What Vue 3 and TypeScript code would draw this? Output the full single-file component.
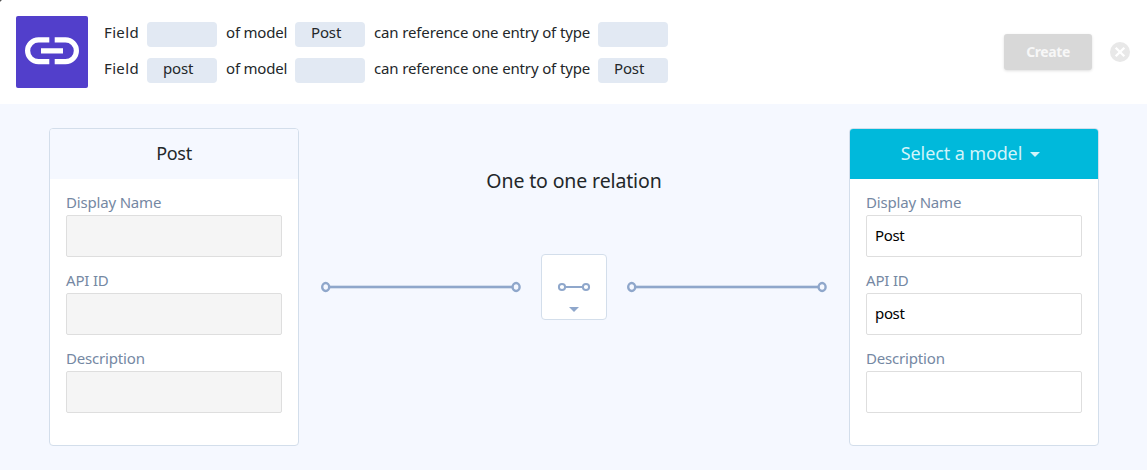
<script setup lang="ts">
interface Sentence {
  field: string
  model: string
  target: string
}

interface Field {
  label: string
  value: string
}

interface ModelCard {
  title: string
  selectable: boolean
  fields: Field[]
}

const sentences: Sentence[] = [
  { field: '', model: 'Post', target: '' },
  { field: 'post', model: '', target: 'Post' },
]

const source: ModelCard = {
  title: 'Post',
  selectable: false,
  fields: [
    { label: 'Display Name', value: '' },
    { label: 'API ID', value: '' },
    { label: 'Description', value: '' },
  ],
}

const target: ModelCard = {
  title: 'Select a model',
  selectable: true,
  fields: [
    { label: 'Display Name', value: 'Post' },
    { label: 'API ID', value: 'post' },
    { label: 'Description', value: '' },
  ],
}
</script>

<template>
  <div class="page">
    <header class="top">
      <div class="logo">
        <svg width="72" height="72" viewBox="0 0 72 72" fill="none" stroke="#fff" stroke-width="5.2">
          <path d="M33.3 23.9H22.5a10.9 10.9 0 0 0 0 21.8h10.8M38.7 23.9h10.8a10.9 10.9 0 0 1 0 21.8H38.7M25 34.8h22" />
        </svg>
      </div>
      <div class="sentences">
        <div v-for="(s, i) in sentences" :key="i" class="sentence">
          <span class="w-field">Field</span>
          <span class="pill">{{ s.field }}</span>
          <span class="w-of">of model</span>
          <span class="pill">{{ s.model }}</span>
          <span class="w-can">can reference one entry of type</span>
          <span class="pill">{{ s.target }}</span>
        </div>
      </div>
      <button class="create" disabled>Create</button>
      <svg class="close" width="20" height="20" viewBox="0 0 20 20">
        <circle cx="10" cy="10" r="10" fill="#e8e8e8" />
        <path d="M5.7 5.7l8.6 8.6M14.3 5.7l-8.6 8.6" stroke="#fff" stroke-width="2.3" />
      </svg>
    </header>

    <main class="board">
      <template v-for="(card, n) in [source, target]" :key="n">
        <section class="card" :class="{ active: card.selectable }">
          <h2 class="card-head">
            <span class="card-title">{{ card.title }}</span>
            <svg v-if="card.selectable" class="caret" width="10" height="5" viewBox="0 0 10 5">
              <path d="M0 0h10L5 5z" fill="currentColor" />
            </svg>
          </h2>
          <div class="card-body">
            <label v-for="f in card.fields" :key="f.label" class="field">
              <span class="label">{{ f.label }}</span>
              <span class="input">{{ f.value }}</span>
            </label>
          </div>
        </section>

        <section v-if="n === 0" class="relation">
          <h1 class="heading">One to one relation</h1>
          <div class="connector">
            <svg width="202" height="12" viewBox="0 0 202 12" fill="none" stroke="#8fa7cb">
              <path d="M9.5 6h183" stroke="#d5dfee" stroke-width="4" />
              <path d="M9.5 6h183" stroke-width="2" />
              <ellipse cx="5.7" cy="6" rx="3.5" ry="4" stroke-width="2.4" />
              <ellipse cx="196.1" cy="6" rx="3.5" ry="4" stroke-width="2.4" />
            </svg>
            <div class="kind">
              <svg width="64" height="64" viewBox="0 0 64 64" fill="none" stroke="#8fa7cb" stroke-width="2">
                <path d="M23 32h18" />
                <circle cx="20" cy="32" r="3.1" />
                <circle cx="44" cy="32" r="3.1" />
                <path d="M27 52h10l-5 5z" fill="#8fa7cb" stroke="none" />
              </svg>
            </div>
            <svg width="202" height="12" viewBox="0 0 202 12" fill="none" stroke="#8fa7cb">
              <path d="M9.5 6h183" stroke="#d5dfee" stroke-width="4" />
              <path d="M9.5 6h183" stroke-width="2" />
              <ellipse cx="5.7" cy="6" rx="3.5" ry="4" stroke-width="2.4" />
              <ellipse cx="196.1" cy="6" rx="3.5" ry="4" stroke-width="2.4" />
            </svg>
          </div>
        </section>
      </template>
    </main>
  </div>
</template>

<style>
body {
  background: #f5f8ff;
}
</style>

<style scoped>
.page {
  width: 1147px;
  height: 470px;
  overflow: hidden;
  background: #f5f8ff;
  color: #23272a;
  font-family: "Noto Sans", "Open Sans", sans-serif;
  font-size: 15px;
}
.top {
  display: flex;
  align-items: center;
  box-sizing: border-box;
  height: 104px;
  padding: 0 17px 0 16px;
  background: radial-gradient(circle at 0 0, #555 1px, transparent 2px) #fff;
}
.logo {
  width: 72px;
  height: 72px;
  border-radius: 2px;
  background: #523fcb;
}
.logo svg {
  display: block;
}
.sentences {
  display: grid;
  gap: 11px;
  margin-left: 16px;
}
.sentence {
  display: grid;
  grid-template-columns: 43px 70px 78px 70px 233px 70px;
  height: 25px;
  line-height: 20px;
  white-space: nowrap;
}
.w-field {
  letter-spacing: 0.35px;
}
.w-of,
.w-can {
  padding-left: 9px;
}
.w-can {
  letter-spacing: -0.14px;
}
.w-of {
  letter-spacing: -0.2px;
}
.pill {
  box-sizing: border-box;
  height: 25px;
  padding-left: 16px;
  border-radius: 4px;
  background: #e2e9f3;
  letter-spacing: -0.15px;
}
.create {
  width: 88px;
  height: 36px;
  margin: 0 18px 0 auto;
  padding: 0;
  border: 0;
  border-radius: 3px;
  background: #d8d8d8;
  box-shadow: 0 1px 3px rgba(0, 0, 0, 0.13);
  color: #f7f7f7;
  font: 700 14px/36px "Noto Sans", sans-serif;
  letter-spacing: -0.4px;
}
.board {
  display: flex;
  justify-content: space-between;
  padding: 24px 48px 0 49px;
}
.card {
  box-sizing: border-box;
  width: 250px;
  height: 318px;
  overflow: hidden;
  border: 1px solid #d3deeb;
  border-radius: 4px;
  background: #fff;
}
.card-head {
  display: flex;
  align-items: center;
  justify-content: center;
  height: 50px;
  margin: 0;
  background: #f5f8ff;
  font-size: 18px;
  font-weight: 400;
  line-height: 50px;
  letter-spacing: -0.3px;
}
.card-title {
  height: 52px;
}
.active .card-head {
  padding-right: 7px;
  width: 241px;
  background: #00b9db;
  color: #d1f4fa;
  letter-spacing: -0.12px;
}
.caret {
  margin-left: 8px;
}
.card-body {
  padding: 13px 16px 0;
}
.field {
  display: block;
  height: 78px;
}
.label {
  display: block;
  height: 23px;
  color: #7588a3;
  line-height: 21px;
  letter-spacing: -0.18px;
}
.input {
  display: block;
  box-sizing: border-box;
  height: 42px;
  padding-left: 8px;
  border: 1px solid #dedede;
  border-radius: 2px;
  background: #f5f5f5;
  color: #000;
  line-height: 39px;
  letter-spacing: -0.35px;
}
.active .input {
  background: #fff;
}
.relation {
  width: 508px;
}
.heading {
  height: 30px;
  margin: 38px 0 0;
  font-size: 19.5px;
  font-weight: 400;
  line-height: 30px;
  letter-spacing: -0.13px;
  text-align: center;
}
.connector {
  display: flex;
  align-items: center;
  justify-content: space-between;
  margin-top: 58px;
}
.kind {
  width: 64px;
  height: 64px;
  border: 1px solid #d3deeb;
  border-radius: 4px;
  background: #fff;
}
.kind svg {
  display: block;
}
</style>
